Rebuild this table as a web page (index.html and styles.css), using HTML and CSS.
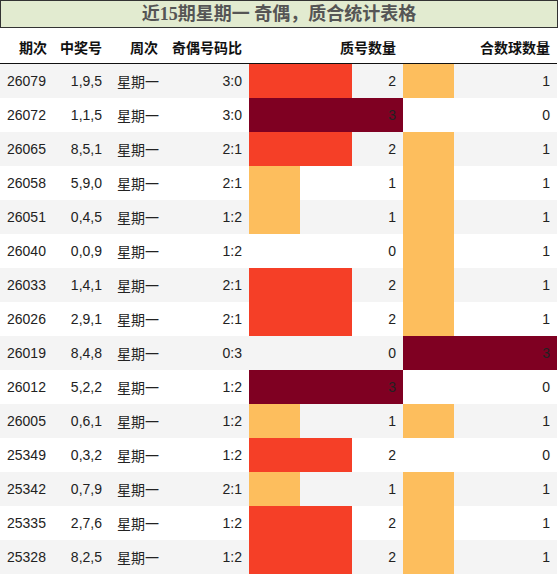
FILE: index.html
```html
<!DOCTYPE html>
<html lang="zh">
<head>
<meta charset="utf-8">
<link rel="stylesheet" href="styles.css">
</head>
<body>
<div class="title">近15期星期一 奇偶，质合统计表格</div>
<div class="table">
  <div class="row head">
    <div class="c">期次</div>
    <div class="c">中奖号</div>
    <div class="c">周次</div>
    <div class="c">奇偶号码比</div>
    <div class="c">质号数量</div>
    <div class="c">合数球数量</div>
  </div>
  <div class="row odd"><div class="c l">26079</div><div class="c">1,9,5</div><div class="c l wk">星期一</div><div class="c">3:0</div><div class="c bc"><div class="bar v2" style="width:66.67%"></div><span>2</span></div><div class="c bc"><div class="bar v1" style="width:33.33%"></div><span>1</span></div></div>
  <div class="row"><div class="c l">26072</div><div class="c">1,1,5</div><div class="c l wk">星期一</div><div class="c">3:0</div><div class="c bc"><div class="bar v3" style="width:100%"></div><span>3</span></div><div class="c bc"><span>0</span></div></div>
  <div class="row odd"><div class="c l">26065</div><div class="c">8,5,1</div><div class="c l wk">星期一</div><div class="c">2:1</div><div class="c bc"><div class="bar v2" style="width:66.67%"></div><span>2</span></div><div class="c bc"><div class="bar v1" style="width:33.33%"></div><span>1</span></div></div>
  <div class="row"><div class="c l">26058</div><div class="c">5,9,0</div><div class="c l wk">星期一</div><div class="c">2:1</div><div class="c bc"><div class="bar v1" style="width:33.33%"></div><span>1</span></div><div class="c bc"><div class="bar v1" style="width:33.33%"></div><span>1</span></div></div>
  <div class="row odd"><div class="c l">26051</div><div class="c">0,4,5</div><div class="c l wk">星期一</div><div class="c">1:2</div><div class="c bc"><div class="bar v1" style="width:33.33%"></div><span>1</span></div><div class="c bc"><div class="bar v1" style="width:33.33%"></div><span>1</span></div></div>
  <div class="row"><div class="c l">26040</div><div class="c">0,0,9</div><div class="c l wk">星期一</div><div class="c">1:2</div><div class="c bc"><span>0</span></div><div class="c bc"><div class="bar v1" style="width:33.33%"></div><span>1</span></div></div>
  <div class="row odd"><div class="c l">26033</div><div class="c">1,4,1</div><div class="c l wk">星期一</div><div class="c">2:1</div><div class="c bc"><div class="bar v2" style="width:66.67%"></div><span>2</span></div><div class="c bc"><div class="bar v1" style="width:33.33%"></div><span>1</span></div></div>
  <div class="row"><div class="c l">26026</div><div class="c">2,9,1</div><div class="c l wk">星期一</div><div class="c">2:1</div><div class="c bc"><div class="bar v2" style="width:66.67%"></div><span>2</span></div><div class="c bc"><div class="bar v1" style="width:33.33%"></div><span>1</span></div></div>
  <div class="row odd"><div class="c l">26019</div><div class="c">8,4,8</div><div class="c l wk">星期一</div><div class="c">0:3</div><div class="c bc"><span>0</span></div><div class="c bc"><div class="bar v3" style="width:100%"></div><span>3</span></div></div>
  <div class="row"><div class="c l">26012</div><div class="c">5,2,2</div><div class="c l wk">星期一</div><div class="c">1:2</div><div class="c bc"><div class="bar v3" style="width:100%"></div><span>3</span></div><div class="c bc"><span>0</span></div></div>
  <div class="row odd"><div class="c l">26005</div><div class="c">0,6,1</div><div class="c l wk">星期一</div><div class="c">1:2</div><div class="c bc"><div class="bar v1" style="width:33.33%"></div><span>1</span></div><div class="c bc"><div class="bar v1" style="width:33.33%"></div><span>1</span></div></div>
  <div class="row"><div class="c l">25349</div><div class="c">0,3,2</div><div class="c l wk">星期一</div><div class="c">1:2</div><div class="c bc"><div class="bar v2" style="width:66.67%"></div><span>2</span></div><div class="c bc"><span>0</span></div></div>
  <div class="row odd"><div class="c l">25342</div><div class="c">0,7,9</div><div class="c l wk">星期一</div><div class="c">2:1</div><div class="c bc"><div class="bar v1" style="width:33.33%"></div><span>1</span></div><div class="c bc"><div class="bar v1" style="width:33.33%"></div><span>1</span></div></div>
  <div class="row"><div class="c l">25335</div><div class="c">2,7,6</div><div class="c l wk">星期一</div><div class="c">1:2</div><div class="c bc"><div class="bar v2" style="width:66.67%"></div><span>2</span></div><div class="c bc"><div class="bar v1" style="width:33.33%"></div><span>1</span></div></div>
  <div class="row odd"><div class="c l">25328</div><div class="c">8,2,5</div><div class="c l wk">星期一</div><div class="c">1:2</div><div class="c bc"><div class="bar v2" style="width:66.67%"></div><span>2</span></div><div class="c bc"><div class="bar v1" style="width:33.33%"></div><span>1</span></div></div>
</div>
</body>
</html>
```
FILE: styles.css
```css
html, body {
  margin: 0;
  padding: 0;
  background: #ffffff;
}
body {
  width: 558px;
}
.title {
  box-sizing: border-box;
  width: 558px;
  height: 28px;
  border: 1px solid #333333;
  background: #e2ebd0;
  color: #555555;
  font-family: "Liberation Serif", "Noto Sans CJK SC", serif;
  font-weight: bold;
  font-size: 18px;
  line-height: 26px;
  text-align: center;
}
.table {
  width: 557px;
  font-family: "Liberation Sans", "Noto Sans CJK SC", sans-serif;
  font-size: 14px;
  color: #222222;
}
.row {
  display: grid;
  grid-template-columns: 54px 55px 56px 84px 154px 154px;
  height: 34px;
  background: #ffffff;
}
.row.odd {
  background: #f4f4f4;
}
.row.head {
  height: 35px;
  border-bottom: 1px solid #111111;
  font-family: "Noto Sans CJK SC", sans-serif;
  font-weight: bold;
  color: #111111;
  background: #ffffff;
}
.head .c {
  padding-top: 3px;
}
.c {
  box-sizing: border-box;
  display: flex;
  align-items: center;
  justify-content: flex-end;
  padding: 0 7px;
  white-space: nowrap;
}
.c.l {
  justify-content: flex-start;
}
.c.wk {
  padding-left: 8px;
  font-family: "Noto Sans CJK SC", sans-serif;
}
.bc {
  position: relative;
}
.bc span {
  position: relative;
}
.bar {
  position: absolute;
  left: 0;
  top: 0;
  bottom: 0;
}
.v1 { background: #fdbe5d; }
.v2 { background: #f53f27; }
.v3 { background: #7f0022; }
```
